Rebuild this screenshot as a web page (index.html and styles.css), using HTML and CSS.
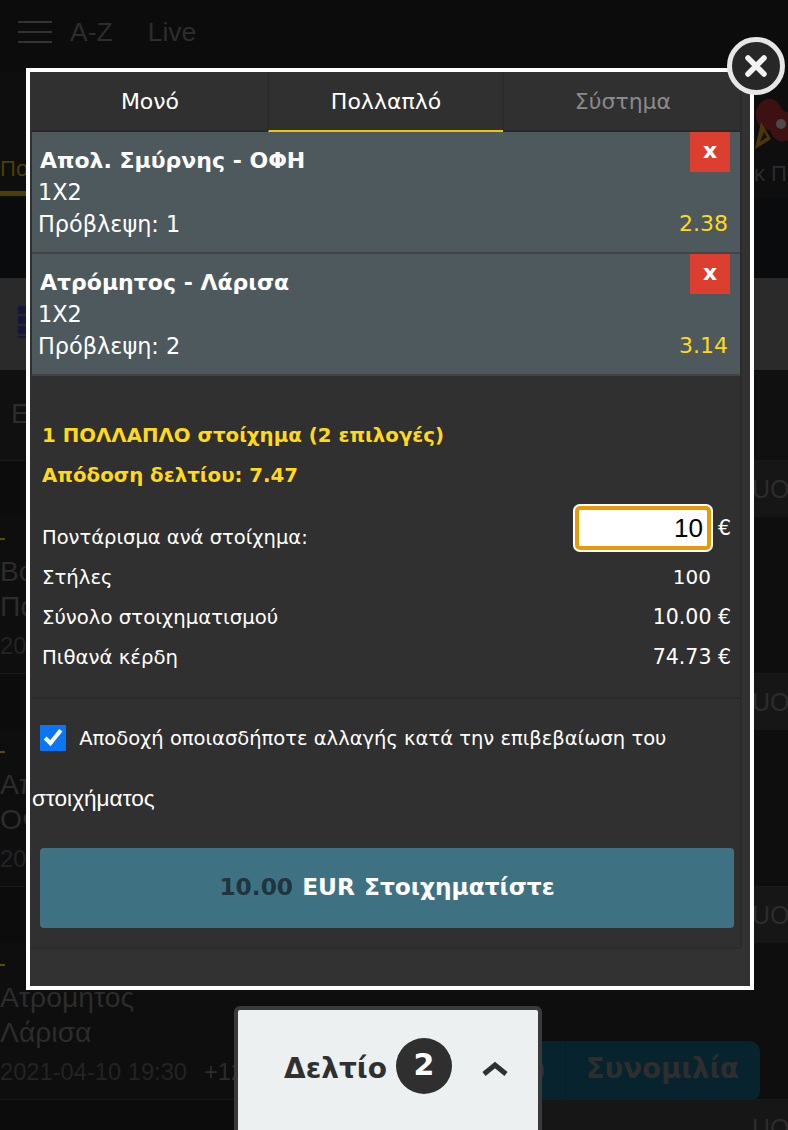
FILE: index.html

```html
<!DOCTYPE html>
<html lang="en">
<head>
    <meta charset="UTF-8">
    <meta name="viewport" content="width=device-width, initial-scale=1.0">
    <title>Δελτίο</title>
    <link rel="stylesheet" href="styles.css">
</head>
<body>
    <div class="page">
        <header class="top-bar">
            <div class="burger"><span></span><span></span><span></span></div>
            <span class="top-link">A-Z</span>
            <span class="top-link">Live</span>
        </header>

        <nav class="sport-nav">
            <div class="sport-tab active">Ποδόσφαιρο</div>
            <div class="sport-tab right">
                <svg class="sport-icon" width="34" height="56" viewBox="0 0 34 56">
                    <path d="M2 18 C2 4 20 -4 26 10 C28 16 34 16 34 16 V44 C26 48 20 44 16 34 C8 34 2 28 2 18Z" fill="#3d1012"/>
                    <circle cx="27" cy="28" r="5" fill="#4a4a4a"/>
                    <path d="M1 53 L7 26 L17 43Z" fill="#4d3708"/>
                    <path d="M6 46 L10 36 L13 41Z" fill="#141008"/>
                </svg>
                <span>κ Πόκερ</span>
            </div>
        </nav>
        <div class="nav-gap"></div>

        <div class="league-band">
            <div class="league-flag"></div>
        </div>
        <div class="section-title">Επόμενοι αγώνες</div>

        <section class="match">
            <div class="match-head"><span></span><span class="market">UO 2.5</span></div>
            <div class="match-dash"></div>
            <div class="team">Βόλος</div>
            <div class="team">Παναθηναϊκός</div>
            <div class="match-date">2021-04-10 17:15</div>
        </section>
        <section class="match">
            <div class="match-head"><span></span><span class="market">UO 2.5</span></div>
            <div class="match-dash"></div>
            <div class="team">Απολ. Σμύρνης</div>
            <div class="team">ΟΦΗ</div>
            <div class="match-date">2021-04-10 17:15</div>
        </section>
        <section class="match">
            <div class="match-head"><span></span><span class="market">UO 2.5</span></div>
            <div class="match-dash"></div>
            <div class="match-body">
                <div>
                    <div class="team">Ατρόμητος</div>
                    <div class="team">Λάρισα</div>
                    <div class="match-date">2021-04-10 19:30<span class="match-more">+125</span></div>
                </div>
                <div class="chat-btn"><span class="chat-count">0</span><span class="chat-label">Συνομιλία</span></div>
            </div>
        </section>
        <section class="match">
            <div class="match-head"><span></span><span class="market">UO 2.5</span></div>
        </section>

        <div class="modal">
            <div class="slip">
                <div class="slip-tabs">
                    <div class="slip-tab">Μονό</div>
                    <div class="slip-tab active">Πολλαπλό</div>
                    <div class="slip-tab disabled">Σύστημα</div>
                </div>

                <div class="bet">
                    <div class="bet-title">Απολ. Σμύρνης - ΟΦΗ</div>
                    <div class="bet-line">1X2</div>
                    <div class="bet-line bet-pick"><span>Πρόβλεψη: 1</span><span class="odds">2.38</span></div>
                    <div class="bet-remove">x</div>
                </div>
                <div class="bet">
                    <div class="bet-title">Ατρόμητος - Λάρισα</div>
                    <div class="bet-line">1X2</div>
                    <div class="bet-line bet-pick"><span>Πρόβλεψη: 2</span><span class="odds">3.14</span></div>
                    <div class="bet-remove">x</div>
                </div>

                <div class="summary">
                    <div class="summary-head">1 ΠΟΛΛΑΠΛΟ στοίχημα (2 επιλογές)</div>
                    <div class="summary-head">Απόδοση δελτίου: 7.47</div>
                    <div class="summary-row stake-row">
                        <span class="stake-label">Ποντάρισμα ανά στοίχημα:</span>
                        <span class="stake"><input class="stake-input" type="text" value="10"> €</span>
                    </div>
                    <div class="summary-row"><span>Στήλες</span><span class="value no-unit">100</span></div>
                    <div class="summary-row"><span>Σύνολο στοιχηματισμού</span><span class="value">10.00 €</span></div>
                    <div class="summary-row"><span>Πιθανά κέρδη</span><span class="value">74.73 €</span></div>
                </div>

                <div class="accept">
                    <input class="accept-check" type="checkbox" id="accept" checked>
                    <label for="accept" class="accept-text">Αποδοχή οποιασδήποτε αλλαγής κατά την επιβεβαίωση του</label>
                    <span class="accept-more">στοιχήματος</span>
                </div>

                <button class="place-bet"><span class="amount">10.00</span> EUR Στοιχηματίστε</button>
            </div>
        </div>

        <div class="modal-close">
            <svg width="26" height="26" viewBox="0 0 26 26">
                <path d="M5 5 L21 21 M21 5 L5 21" stroke="#f2f2f2" stroke-width="5.5" stroke-linecap="round"/>
            </svg>
        </div>

        <div class="slip-toggle">
            <span class="slip-toggle-label">Δελτίο</span>
            <span class="slip-count">2</span>
            <svg class="slip-chevron" width="28" height="18" viewBox="0 0 28 18">
                <path d="M3 14 L14 5 L25 14" fill="none" stroke="#303030" stroke-width="5"/>
            </svg>
        </div>
    </div>
</body>
</html>
```

FILE: styles.css

```css
* {
    box-sizing: border-box;
}
body {
    margin: 0;
    font-family: "DejaVu Sans", Verdana, sans-serif;
    background-color: #0c0c0c;
}
.page {
    position: relative;
    width: 788px;
    height: 1130px;
    overflow: hidden;
    background-color: #0c0c0c;
    color: #2c2c2c;
}

/* page behind the overlay */
.top-bar {
    display: flex;
    align-items: center;
    height: 72px;
    padding: 0 18px 8px;
}
.burger {
    display: flex;
    flex-direction: column;
    gap: 8px;
    width: 34px;
    margin-right: 18px;
}
.burger span {
    height: 2px;
    background-color: #333;
}
.top-link {
    margin-right: 35px;
    font-family: "Liberation Sans", Arial, sans-serif;
    font-size: 26.5px;
    color: #2d2d2d;
}
.sport-nav {
    display: flex;
    justify-content: space-between;
    height: 126px;
    background-color: #0e0e0e;
    font-family: "Liberation Sans", Arial, sans-serif;
    font-size: 22px;
    overflow: hidden;
}
.sport-tab {
    display: flex;
    flex-direction: column;
    justify-content: flex-end;
    flex: none;
    width: 26px;
    height: 124px;
    padding-bottom: 9px;
    white-space: nowrap;
    overflow: hidden;
    color: #4a3e0a;
    border-bottom: 5px solid #4a3e0a;
}
.sport-tab.right {
    width: 34px;
    height: 126px;
    padding-bottom: 11px;
    color: #2c2c2c;
    border-bottom: 0;
}
.sport-icon {
    margin-bottom: 9px;
    flex: none;
}
.nav-gap {
    height: 80px;
    background-color: #0a0b0d;
}
.league-band {
    display: flex;
    align-items: center;
    height: 92px;
    padding-left: 18px;
    padding-bottom: 4px;
    background-color: #2a2a2a;
}
.league-flag {
    width: 10px;
    height: 32px;
    background: repeating-linear-gradient(#17173a 0 8px, #2a2a2a 8px 10px);
}
.section-title {
    height: 90px;
    padding: 28px 0 0 11px;
    background-color: #101010;
    font-family: "Liberation Sans", Arial, sans-serif;
    font-size: 28px;
    line-height: 32px;
    white-space: nowrap;
}
.match {
    height: 213px;
    background-color: #0e0e0e;
    font-family: "Liberation Sans", Arial, sans-serif;
}
.match-head {
    display: grid;
    grid-template-columns: 1fr 248px;
    height: 57px;
    overflow: hidden;
    background-color: #0c0c0c;
    border-top: 1px solid #191919;
}
.market {
    padding-left: 212px;
    background-color: #161616;
    font-size: 25px;
    line-height: 56px;
    white-space: nowrap;
}
.match-dash {
    width: 5px;
    height: 2px;
    margin: 21px 0 14px;
    background-color: #5c4c0a;
}
.team {
    font-size: 28.3px;
    line-height: 35px;
    white-space: nowrap;
}
.match-date {
    margin-top: 7px;
    font-size: 23.7px;
    line-height: 30px;
    white-space: nowrap;
    color: #232323;
}
.match-more {
    margin-left: 17px;
    color: #2c2c2c;
}
.match-body {
    display: flex;
    justify-content: space-between;
    align-items: flex-end;
    padding-right: 28px;
}
.chat-btn {
    display: flex;
    align-items: center;
    height: 60px;
    border-radius: 10px;
    margin-bottom: -14px;
    background-color: #07232e;
    font-family: "DejaVu Sans", Verdana, sans-serif;
    font-size: 27.5px;
    font-weight: bold;
    color: #2e2e2e;
}
.chat-count {
    width: 65px;
    padding-right: 20px;
    text-align: right;
}
.chat-label {
    height: 100%;
    padding: 11px 21px 0 20px;
    border-left: 1px solid #062029;
}

/* overlay */
.modal {
    position: absolute;
    left: 26px;
    top: 68px;
    width: 728px;
    height: 922px;
    border: 4px solid #fff;
    background-color: #323232;
}
.slip {
    width: 712px;
    height: 877px;
    border-right: 2px solid #2b2b2b;
    border-bottom: 2px solid #2b2b2b;
    background-color: #303030;
    color: #fff;
    font-size: 19.7px;
}
.slip-tabs {
    display: grid;
    grid-template-columns: 236px 235px 1fr;
    height: 60px;
    padding-left: 2px;
    border-bottom: 2px solid #2a2a2a;
}
.slip-tab {
    font-size: 22px;
    line-height: 60px;
    text-align: center;
    border-left: 1px solid #2a2a2a;
}
.slip-tab:first-child {
    border-left: 0;
}
.slip-tab.active {
    height: 60px;
    border-bottom: 2px solid #f1c40f;
}
.slip-tab.disabled {
    padding-left: 2px;
    color: #8a8a8a;
}
.bet {
    position: relative;
    width: 708px;
    height: 122px;
    margin-left: 2px;
    padding: 12px 12px 0 6px;
    background-color: #4e595e;
    border-bottom: 2px solid #444;
}
.bet-title {
    margin: 1px 0 -1px;
    padding-left: 2px;
    font-size: 22px;
    font-weight: bold;
    line-height: 32px;
}
.bet-line {
    font-size: 22.4px;
    line-height: 32px;
}
.bet-pick {
    display: flex;
    justify-content: space-between;
}
.odds {
    font-size: 22px;
    color: #ffd91a;
}
.bet-remove {
    position: absolute;
    top: 0;
    right: 10px;
    width: 40px;
    height: 40px;
    background-color: #dc3f30;
    font-size: 22px;
    font-weight: bold;
    line-height: 37px;
    text-align: center;
}
.summary {
    height: 323px;
    padding: 40px 9px 0 12px;
    border-bottom: 2px solid #2b2b2b;
}
.summary-head {
    height: 40px;
    font-size: 19.8px;
    font-weight: bold;
    line-height: 40px;
    color: #ffd91a;
}
.summary-row {
    display: flex;
    justify-content: space-between;
    align-items: center;
    height: 40px;
}
.stake-row {
    margin-top: 21px;
}
.stake-label {
    font-size: 19.5px;
}
.stake {
    display: flex;
    align-items: center;
    gap: 5px;
    margin-bottom: 18px;
    font-size: 20.5px;
}
.value {
    font-size: 20.5px;
}
.stake-input {
    width: 136px;
    height: 44px;
    margin: 0 2px;
    padding: 0 4px;
    border: 4px solid #e79a05;
    border-radius: 5px;
    box-shadow: 0 0 0 2px #fff;
    outline: 0;
    background-color: #fff;
    font-family: "Liberation Sans", Arial, sans-serif;
    font-size: 26px;
    text-align: right;
    color: #000;
}
.value.no-unit {
    margin-right: 20px;
    font-size: 20px;
}
.accept {
    height: 149px;
    padding: 10px 0 0 2px;
    font-size: 19.5px;
    line-height: 60px;
}
.accept-check {
    width: 26px;
    height: 26px;
    margin: 0 7px 0 8px;
    vertical-align: -6px;
    accent-color: #0a76f6;
}
.accept-more {
    font-family: "Liberation Sans", Arial, sans-serif;
    font-size: 22.6px;
}
.place-bet {
    display: block;
    width: 694px;
    height: 80px;
    margin-left: 10px;
    padding-bottom: 4px;
    border: 0;
    border-radius: 4px;
    background-color: #3e7282;
    color: #fff;
    font-family: "DejaVu Sans", Verdana, sans-serif;
    font-size: 23.3px;
    font-weight: bold;
    word-spacing: 1px;
}
.amount {
    color: #1f343d;
}
.modal-close {
    position: absolute;
    left: 727px;
    top: 37px;
    display: flex;
    align-items: center;
    justify-content: center;
    width: 58px;
    height: 58px;
    border: 5px solid #e6e6e6;
    border-radius: 50%;
    background-color: #272727;
}
.slip-toggle {
    position: absolute;
    left: 234px;
    top: 1006px;
    display: flex;
    align-items: center;
    width: 308px;
    height: 130px;
    padding: 0 0 10px 46px;
    border: 4px solid #3a3a3a;
    border-radius: 6px 6px 0 0;
    background-color: #ecf0f1;
    color: #303030;
}
.slip-toggle-label {
    margin-top: 4px;
    font-size: 28px;
    font-weight: bold;
}
.slip-count {
    width: 56px;
    height: 56px;
    margin-left: 9px;
    border-radius: 50%;
    background-color: #2f2f2f;
    color: #fff;
    font-size: 30px;
    font-weight: bold;
    line-height: 54px;
    text-align: center;
}
.slip-chevron {
    margin: 6px 0 0 29px;
}
```
